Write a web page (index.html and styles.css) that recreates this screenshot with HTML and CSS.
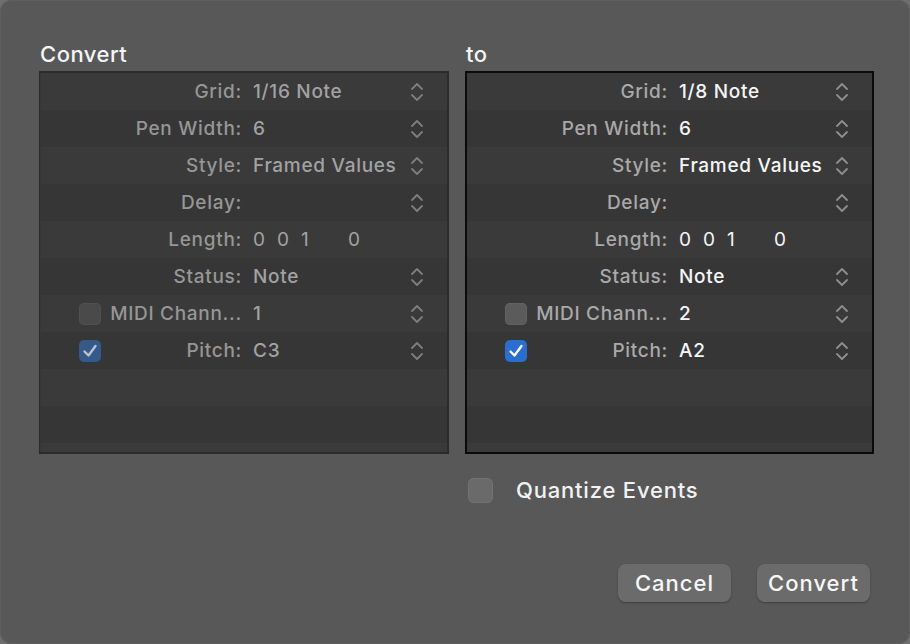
FILE: index.html
```html
<!DOCTYPE html>
<html lang="en">
<head>
    <meta charset="UTF-8">
    <meta name="viewport" content="width=device-width, initial-scale=1.0">
    <title>Convert</title>
    <link rel="stylesheet" href="styles.css">
</head>
<body>
    <div class="window">
        <div class="columns">
            <div class="column">
                <h2>Convert</h2>
                <div class="table dim">
                    <div class="row"><div class="label"><span>Grid:</span></div><div class="value">1/16 Note</div><svg class="stepper" viewBox="0 0 14 20"><path d="M2 7L7 2L12 7M2 13L7 18L12 13"/></svg></div>
                    <div class="row"><div class="label"><span>Pen Width:</span></div><div class="value">6</div><svg class="stepper" viewBox="0 0 14 20"><path d="M2 7L7 2L12 7M2 13L7 18L12 13"/></svg></div>
                    <div class="row"><div class="label"><span>Style:</span></div><div class="value">Framed Values</div><svg class="stepper" viewBox="0 0 14 20"><path d="M2 7L7 2L12 7M2 13L7 18L12 13"/></svg></div>
                    <div class="row"><div class="label"><span>Delay:</span></div><div class="value"></div><svg class="stepper" viewBox="0 0 14 20"><path d="M2 7L7 2L12 7M2 13L7 18L12 13"/></svg></div>
                    <div class="row"><div class="label"><span>Length:</span></div><div class="value length"><span>0</span><span>0</span><span>1</span><span class="last">0</span></div></div>
                    <div class="row"><div class="label"><span>Status:</span></div><div class="value">Note</div><svg class="stepper" viewBox="0 0 14 20"><path d="M2 7L7 2L12 7M2 13L7 18L12 13"/></svg></div>
                    <div class="row"><div class="label"><i class="check"></i><span>MIDI Chann...</span></div><div class="value">1</div><svg class="stepper" viewBox="0 0 14 20"><path d="M2 7L7 2L12 7M2 13L7 18L12 13"/></svg></div>
                    <div class="row"><div class="label"><i class="check on"><svg viewBox="0 0 22 22"><path d="M5.5 11.5L9.5 15.5L16.5 6"/></svg></i><span>Pitch:</span></div><div class="value">C3</div><svg class="stepper" viewBox="0 0 14 20"><path d="M2 7L7 2L12 7M2 13L7 18L12 13"/></svg></div>
                    <div class="row"></div>
                    <div class="row"></div>
                    <div class="row"></div>
                </div>
            </div>
            <div class="column">
                <h2>to</h2>
                <div class="table">
                    <div class="row"><div class="label"><span>Grid:</span></div><div class="value">1/8 Note</div><svg class="stepper" viewBox="0 0 14 20"><path d="M2 7L7 2L12 7M2 13L7 18L12 13"/></svg></div>
                    <div class="row"><div class="label"><span>Pen Width:</span></div><div class="value">6</div><svg class="stepper" viewBox="0 0 14 20"><path d="M2 7L7 2L12 7M2 13L7 18L12 13"/></svg></div>
                    <div class="row"><div class="label"><span>Style:</span></div><div class="value">Framed Values</div><svg class="stepper" viewBox="0 0 14 20"><path d="M2 7L7 2L12 7M2 13L7 18L12 13"/></svg></div>
                    <div class="row"><div class="label"><span>Delay:</span></div><div class="value"></div><svg class="stepper" viewBox="0 0 14 20"><path d="M2 7L7 2L12 7M2 13L7 18L12 13"/></svg></div>
                    <div class="row"><div class="label"><span>Length:</span></div><div class="value length"><span>0</span><span>0</span><span>1</span><span class="last">0</span></div></div>
                    <div class="row"><div class="label"><span>Status:</span></div><div class="value">Note</div><svg class="stepper" viewBox="0 0 14 20"><path d="M2 7L7 2L12 7M2 13L7 18L12 13"/></svg></div>
                    <div class="row"><div class="label"><i class="check"></i><span>MIDI Chann...</span></div><div class="value">2</div><svg class="stepper" viewBox="0 0 14 20"><path d="M2 7L7 2L12 7M2 13L7 18L12 13"/></svg></div>
                    <div class="row"><div class="label"><i class="check on"><svg viewBox="0 0 22 22"><path d="M5.5 11.5L9.5 15.5L16.5 6"/></svg></i><span>Pitch:</span></div><div class="value">A2</div><svg class="stepper" viewBox="0 0 14 20"><path d="M2 7L7 2L12 7M2 13L7 18L12 13"/></svg></div>
                    <div class="row"></div>
                    <div class="row"></div>
                    <div class="row"></div>
                </div>
                <label class="quantize"><i class="box"></i>Quantize Events</label>
            </div>
        </div>
        <div class="actions">
            <button class="btn">Cancel</button>
            <button class="btn">Convert</button>
        </div>
    </div>
</body>
</html>
```

FILE: styles.css
```css
body {
    margin: 0;
    padding: 0;
    background-color: #6e6e6e;
    font-family: Inter, "Liberation Sans", sans-serif;
}

.window {
    width: 910px;
    height: 644px;
    box-sizing: border-box;
    padding: 40px 0 0 39px;
    background-color: #585858;
    border-radius: 12px;
    box-shadow: inset 0 0 0 1px #5f5f5f;
}

.columns {
    display: grid;
    grid-template-columns: 410px 409px;
    column-gap: 16px;
}

h2 {
    margin: 0;
    height: 31px;
    font-size: 22px;
    font-weight: 500;
    letter-spacing: 0.5px;
    line-height: 29px;
    color: #f4f4f4;
    padding-left: 1px;
}

.table {
    height: 383px;
    box-sizing: border-box;
    border: 2px solid #0a0a0a;
    background-color: #373737;
    overflow: hidden;
}

.table.dim {
    border-color: #2b2b2b;
    border-left-width: 1px;
    padding-left: 1px;
}

.row {
    height: 37px;
    display: grid;
    grid-template-columns: 201px 1fr 14px;
    column-gap: 11px;
    align-items: center;
    padding-right: 23px;
    font-size: 19px;
    font-weight: 500;
    letter-spacing: 0.7px;
    background-color: #3a3a3a;
}

.row:nth-child(even) {
    background-color: #363636;
}

.label {
    display: flex;
    align-items: center;
    padding-left: 38px;
    color: #a9a9a9;
}

.label span {
    margin-left: auto;
    white-space: nowrap;
}

.value {
    color: #f5f5f5;
    white-space: nowrap;
}

.dim .label {
    color: #969696;
}

.dim .value {
    color: #a2a2a2;
}

.length {
    display: flex;
    font-weight: 400;
}

.length span {
    width: 24px;
}

.length span.last {
    margin-left: 23px;
}

.stepper {
    width: 14px;
    height: 20px;
    fill: none;
    stroke: #8e8e8e;
    stroke-width: 1.8;
    stroke-linecap: round;
    stroke-linejoin: round;
}

.dim .stepper {
    stroke: #7e7e7e;
}

.check {
    width: 22px;
    height: 22px;
    border-radius: 5px;
    background-color: #5b5b5b;
    box-shadow: inset 0 0 0 1px #626262;
    display: flex;
}

.dim .check {
    background-color: #4a4a4a;
    box-shadow: inset 0 0 0 1px #505050;
}

.check.on {
    background-color: #2a6fd0;
    box-shadow: none;
}

.dim .check.on {
    background-color: #35598a;
}

.check svg {
    width: 22px;
    height: 22px;
    fill: none;
    stroke: #ffffff;
    stroke-width: 2.4;
    stroke-linecap: round;
    stroke-linejoin: round;
}

.dim .check svg {
    stroke: #b8c4d4;
}

.quantize {
    display: flex;
    align-items: center;
    margin-top: 23px;
    margin-left: 3px;
    font-size: 22px;
    font-weight: 500;
    letter-spacing: 0.8px;
    color: #f2f2f2;
}

.quantize .box {
    width: 25px;
    height: 25px;
    border-radius: 6px;
    background-color: #6a6a6a;
    box-shadow: inset 0 0 0 1px #727272;
    margin-right: 23px;
}

.actions {
    display: flex;
    justify-content: flex-end;
    gap: 26px;
    margin-top: 61px;
    padding-right: 40px;
}

.btn {
    width: 113px;
    height: 38px;
    border: none;
    border-radius: 8px;
    background-color: #6b6b6b;
    box-shadow: 0 1px 2px rgba(0, 0, 0, 0.3);
    color: #f6f6f6;
    font-family: Inter, "Liberation Sans", sans-serif;
    font-size: 22px;
    font-weight: 500;
    letter-spacing: 1px;
}
```
